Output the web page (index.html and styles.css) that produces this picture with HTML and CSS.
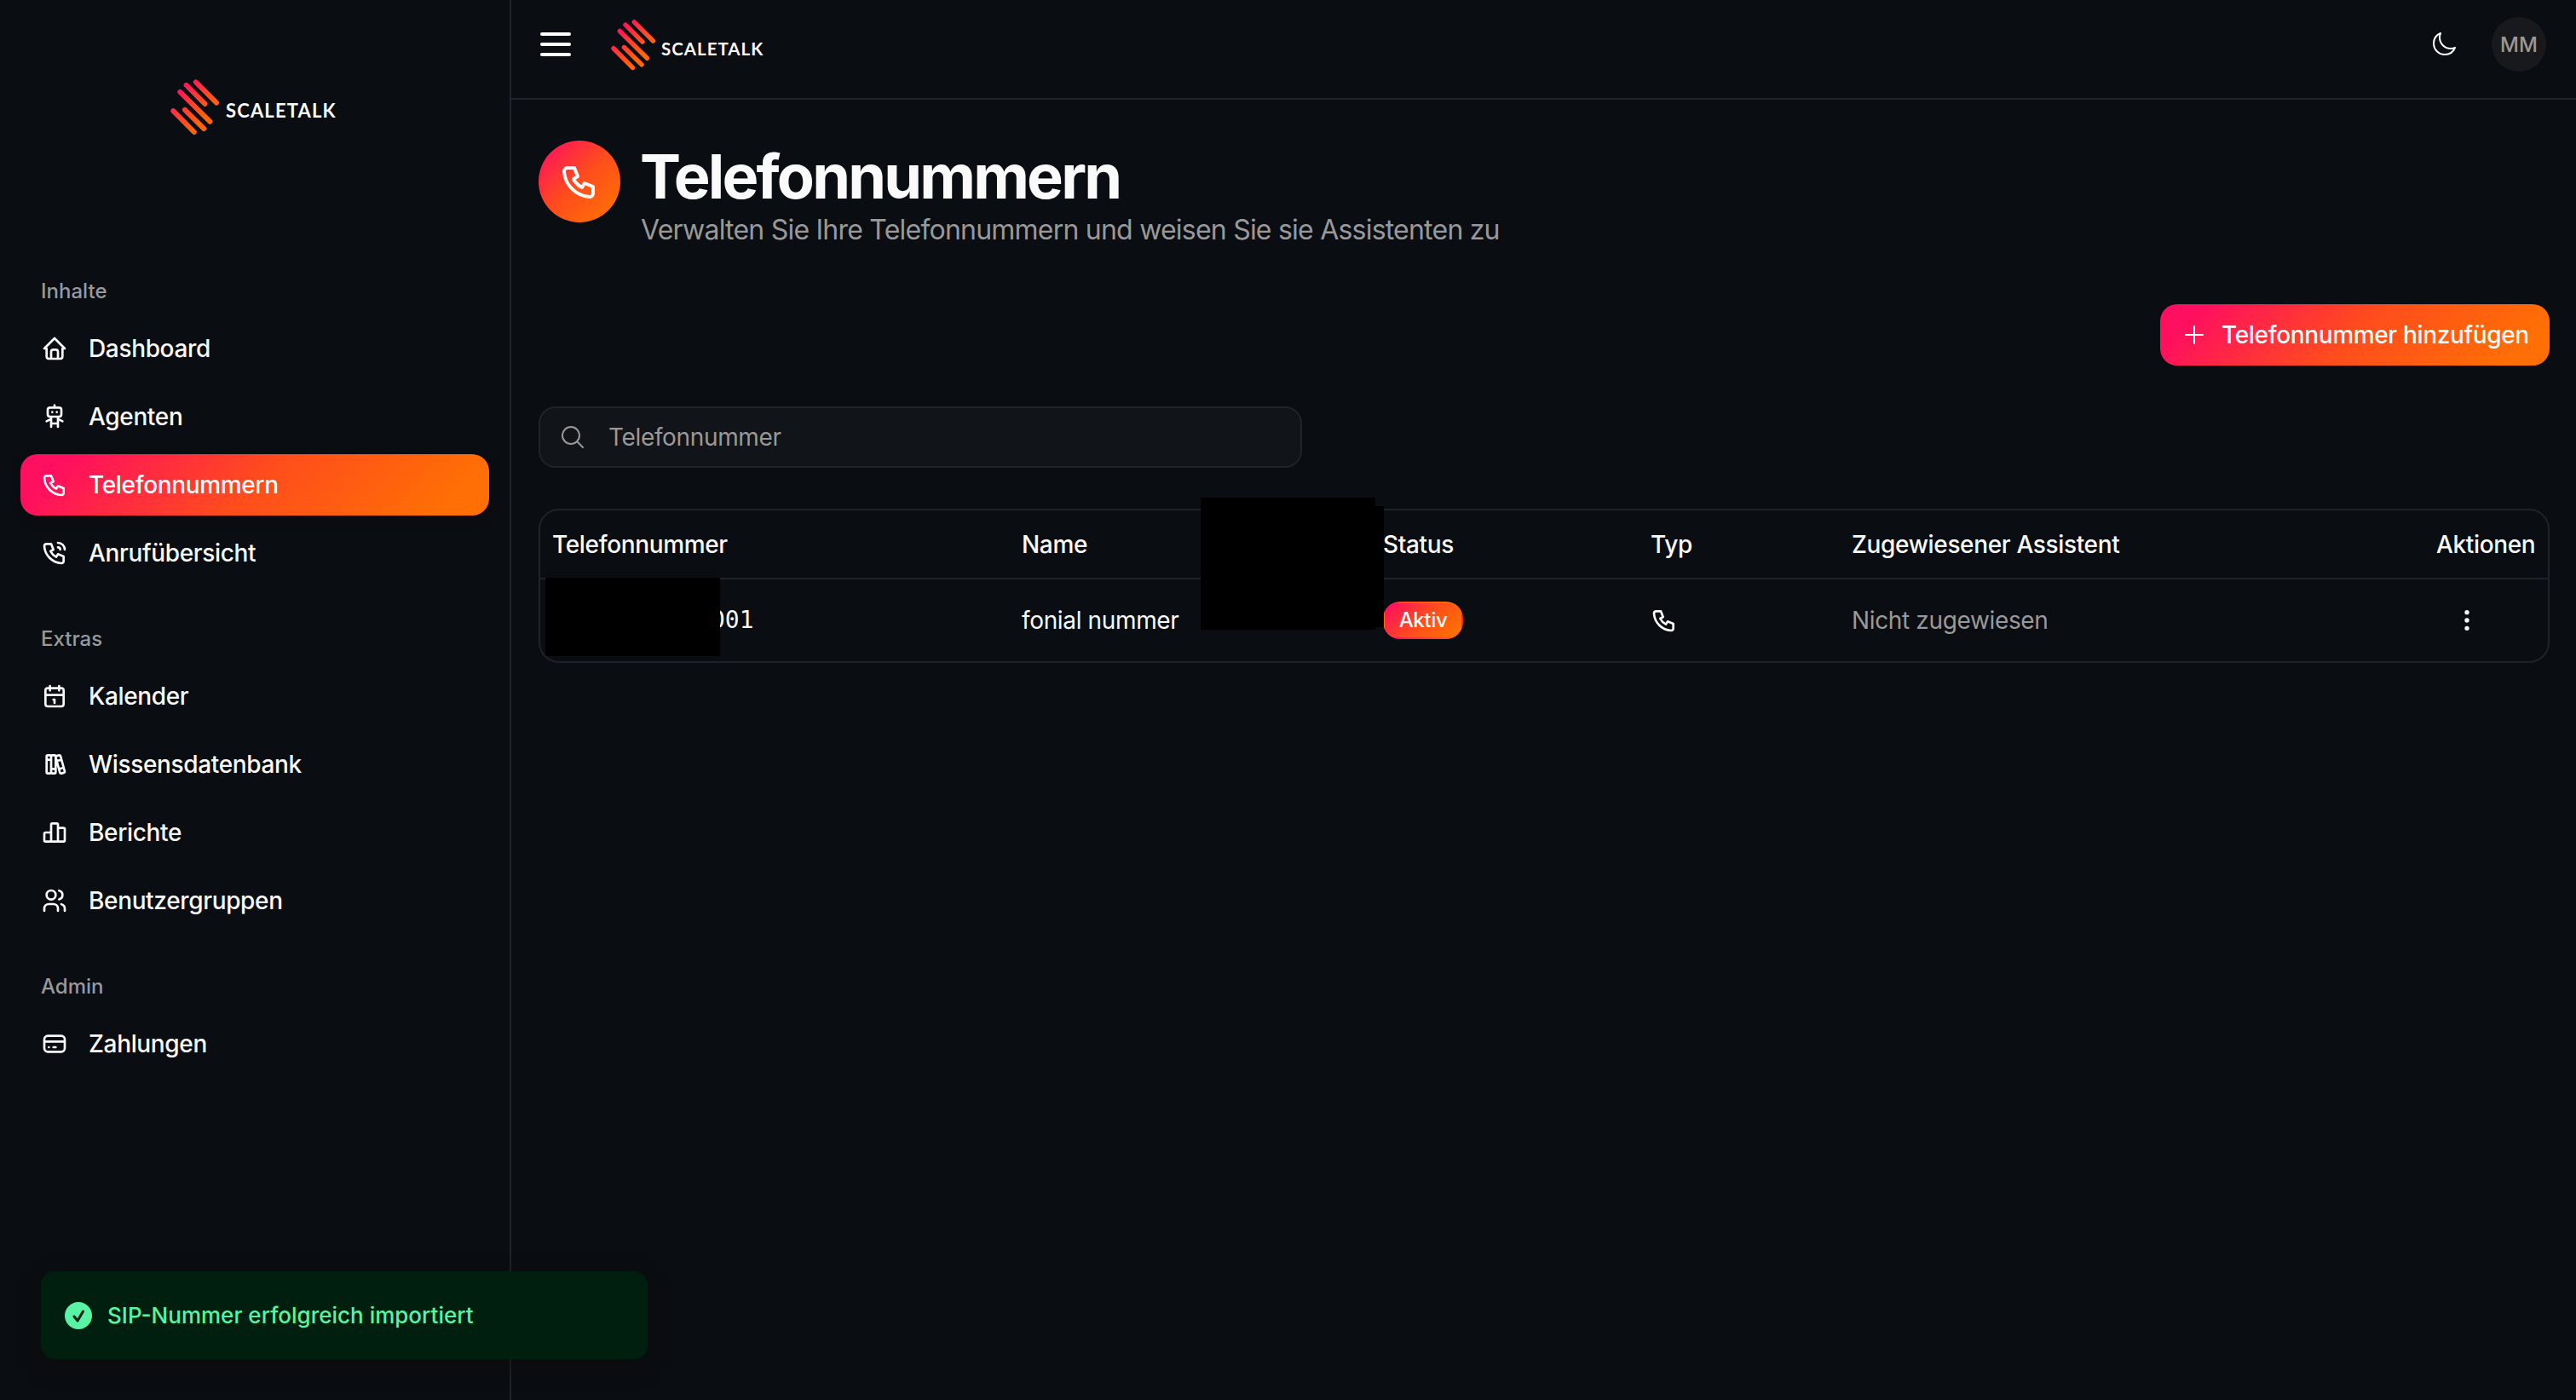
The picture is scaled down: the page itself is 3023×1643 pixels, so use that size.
FILE: index.html
```html
<!DOCTYPE html>
<html lang="de">
<head>
    <meta charset="UTF-8">
    <meta name="viewport" content="width=device-width, initial-scale=1.0">
    <title>Telefonnummern</title>
    <link rel="stylesheet" href="styles.css">
</head>
<body>
    <svg class="sprite" width="0" height="0">
        <defs>
            <linearGradient id="logo-gradient" gradientUnits="userSpaceOnUse" x1="90" y1="100" x2="190" y2="200">
                <stop offset="0" stop-color="#ff0f5f"/>
                <stop offset="0.5" stop-color="#ff4030"/>
                <stop offset="1" stop-color="#ff660a"/>
            </linearGradient>
            <symbol id="logo" viewBox="60 66 175 200">
                <path d="M150 78l73 73M116 89l66 66M94 113l106 105M70 180l74 75M111 176l68 67" fill="none" stroke="url(#logo-gradient)" stroke-width="18" stroke-linecap="round"/>
            </symbol>
            <symbol id="home" viewBox="0 0 24 24">
                <path d="M5 12H3l9-9l9 9h-2M5 12v7a2 2 0 0 0 2 2h10a2 2 0 0 0 2-2v-7M9 21v-6a2 2 0 0 1 2-2h2a2 2 0 0 1 2 2v6"/>
            </symbol>
            <symbol id="robot" viewBox="0 0 24 24">
                <path d="M6 6a2 2 0 0 1 2-2h8a2 2 0 0 1 2 2v4a2 2 0 0 1-2 2H8a2 2 0 0 1-2-2zM12 2v2M9 12v9M15 12v9M5 16l4-2M15 14l4 2M9 18h6M10 8v.01M14 8v.01"/>
            </symbol>
            <symbol id="phone" viewBox="0 0 24 24">
                <path d="M5 4h4l2 5l-2.5 1.5a11 11 0 0 0 5 5l1.5-2.5l5 2v4a2 2 0 0 1-2 2a16 16 0 0 1-15-15a2 2 0 0 1 2-2"/>
            </symbol>
            <symbol id="phone-call" viewBox="0 0 24 24">
                <path d="M5 4h4l2 5l-2.5 1.5a11 11 0 0 0 5 5l1.5-2.5l5 2v4a2 2 0 0 1-2 2a16 16 0 0 1-15-15a2 2 0 0 1 2-2M15 7a2 2 0 0 1 2 2M15 3a6 6 0 0 1 6 6"/>
            </symbol>
            <symbol id="calendar" viewBox="0 0 24 24">
                <path d="M4 7a2 2 0 0 1 2-2h12a2 2 0 0 1 2 2v12a2 2 0 0 1-2 2H6a2 2 0 0 1-2-2zM16 3v4M8 3v4M4 11h16M11 15h1M12 15v3"/>
            </symbol>
            <symbol id="books" viewBox="0 0 24 24">
                <path d="M5 5a1 1 0 0 1 1-1h2a1 1 0 0 1 1 1v14a1 1 0 0 1-1 1H6a1 1 0 0 1-1-1zM9 5a1 1 0 0 1 1-1h2a1 1 0 0 1 1 1v14a1 1 0 0 1-1 1h-2a1 1 0 0 1-1-1zM5 8h4M9 16h4M13.803 4.56l2.184-.53c.562-.135 1.133.19 1.282.732l3.695 13.418a1.02 1.02 0 0 1-.634 1.219l-.133.041l-2.184.53c-.562.135-1.133-.19-1.282-.732l-3.695-13.418a1.02 1.02 0 0 1 .634-1.219zM14 9l4-1M16 16l3.923-.98"/>
            </symbol>
            <symbol id="chart" viewBox="0 0 24 24">
                <path d="M3 13a1 1 0 0 1 1-1h4a1 1 0 0 1 1 1v6a1 1 0 0 1-1 1H4a1 1 0 0 1-1-1zM15 9a1 1 0 0 1 1-1h4a1 1 0 0 1 1 1v10a1 1 0 0 1-1 1h-4a1 1 0 0 1-1-1zM9 5a1 1 0 0 1 1-1h4a1 1 0 0 1 1 1v14a1 1 0 0 1-1 1h-4a1 1 0 0 1-1-1zM4 20h14"/>
            </symbol>
            <symbol id="users" viewBox="0 0 24 24">
                <path d="M5 7a4 4 0 1 0 8 0a4 4 0 1 0-8 0M3 21v-2a4 4 0 0 1 4-4h4a4 4 0 0 1 4 4v2M16 3.13a4 4 0 0 1 0 7.75M21 21v-2a4 4 0 0 0-3-3.85"/>
            </symbol>
            <symbol id="card" viewBox="0 0 24 24">
                <path d="M3 8a3 3 0 0 1 3-3h12a3 3 0 0 1 3 3v8a3 3 0 0 1-3 3H6a3 3 0 0 1-3-3zM3 10h18M7 15h.01M11 15h2"/>
            </symbol>
            <symbol id="moon" viewBox="0 0 24 24">
                <path d="M21.752 15.002A9.72 9.72 0 0 1 18 15.75c-5.385 0-9.75-4.365-9.75-9.75 0-1.33.266-2.597.748-3.752A9.753 9.753 0 0 0 3 11.25C3 16.635 7.365 21 12.75 21a9.753 9.753 0 0 0 9.002-5.998Z"/>
            </symbol>
            <symbol id="plus" viewBox="0 0 24 24">
                <path d="M12 4.5v15m7.5-7.5h-15"/>
            </symbol>
            <symbol id="search" viewBox="0 0 24 24">
                <path d="M21 21l-5.197-5.197A7.5 7.5 0 1 0 5.196 5.196a7.5 7.5 0 0 0 10.607 10.607"/>
            </symbol>
            <symbol id="dots" viewBox="0 0 24 24">
                <path d="M11 12a1 1 0 1 0 2 0a1 1 0 1 0-2 0M11 19a1 1 0 1 0 2 0a1 1 0 1 0-2 0M11 5a1 1 0 1 0 2 0a1 1 0 1 0-2 0"/>
            </symbol>
        </defs>
    </svg>

    <div class="app">
        <aside class="sidebar">
            <div class="logo">
                <svg class="logo-mark"><use href="#logo"/></svg>
                <span class="logo-text">SCALETALK</span>
            </div>

            <nav>
                <div class="nav-section">
                    <div class="nav-label">Inhalte</div>
                    <a class="nav-item"><svg class="icon"><use href="#home"/></svg><span>Dashboard</span></a>
                    <a class="nav-item"><svg class="icon"><use href="#robot"/></svg><span>Agenten</span></a>
                    <a class="nav-item active"><svg class="icon"><use href="#phone"/></svg><span>Telefonnummern</span></a>
                    <a class="nav-item"><svg class="icon"><use href="#phone-call"/></svg><span>Anrufübersicht</span></a>
                </div>
                <div class="nav-section">
                    <div class="nav-label">Extras</div>
                    <a class="nav-item"><svg class="icon"><use href="#calendar"/></svg><span>Kalender</span></a>
                    <a class="nav-item"><svg class="icon"><use href="#books"/></svg><span>Wissensdatenbank</span></a>
                    <a class="nav-item"><svg class="icon"><use href="#chart"/></svg><span>Berichte</span></a>
                    <a class="nav-item"><svg class="icon"><use href="#users"/></svg><span>Benutzergruppen</span></a>
                </div>
                <div class="nav-section">
                    <div class="nav-label">Admin</div>
                    <a class="nav-item"><svg class="icon"><use href="#card"/></svg><span>Zahlungen</span></a>
                </div>
            </nav>
        </aside>

        <div class="main">
            <header class="topbar">
                <button class="menu-button" aria-label="Menü">
                    <span></span>
                    <span></span>
                    <span></span>
                </button>
                <div class="logo logo-small">
                    <svg class="logo-mark"><use href="#logo"/></svg>
                    <span class="logo-text">SCALETALK</span>
                </div>
                <div class="topbar-right">
                    <svg class="icon thin"><use href="#moon"/></svg>
                    <div class="avatar">MM</div>
                </div>
            </header>

            <main class="content">
                <div class="page-head">
                    <div class="page-icon">
                        <svg class="icon"><use href="#phone"/></svg>
                    </div>
                    <div>
                        <h1>Telefonnummern</h1>
                        <p class="subtitle">Verwalten Sie Ihre Telefonnummern und weisen Sie sie Assistenten zu</p>
                    </div>
                </div>

                <div class="actions">
                    <button class="add-button">
                        <svg class="icon thin"><use href="#plus"/></svg>
                        <span>Telefonnummer hinzufügen</span>
                    </button>
                </div>

                <div class="search">
                    <svg class="icon thin"><use href="#search"/></svg>
                    <span>Telefonnummer</span>
                </div>

                <div class="table">
                    <div class="row head">
                        <div>Telefonnummer</div>
                        <div>Name</div>
                        <div>Status</div>
                        <div>Typ</div>
                        <div>Zugewiesener Assistent</div>
                        <div>Aktionen</div>
                    </div>
                    <div class="row">
                        <div class="number">001</div>
                        <div>fonial nummer</div>
                        <div><span class="badge">Aktiv</span></div>
                        <div><svg class="icon"><use href="#phone"/></svg></div>
                        <div class="muted">Nicht zugewiesen</div>
                        <div><button class="row-menu" aria-label="Mehr"><svg class="icon"><use href="#dots"/></svg></button></div>
                    </div>
                    <div class="mask mask-number"></div>
                    <div class="mask mask-name"></div>
                    <div class="mask mask-name-edge"></div>
                </div>
            </main>
        </div>
    </div>

    <div class="toast">
        <svg class="toast-icon" viewBox="0 0 32 32">
            <circle cx="16" cy="16" r="16"/>
            <path d="M11 17l4 5l6.5-11"/>
        </svg>
        <span>SIP-Nummer erfolgreich importiert</span>
    </div>
</body>
</html>
```
FILE: styles.css
```css
:root {
    --bg: #0a0d12;
    --border: #1f232b;
    --text: #fafafa;
    --muted: #999;
    --gradient: linear-gradient(135deg, #ff0f5f 10%, #ff4d1c 50%, #ff6f05 90%);
}
* {
    box-sizing: border-box;
}
body {
    margin: 0;
    font-family: Inter, sans-serif;
    font-size: 28px;
    line-height: 40px;
    letter-spacing: -0.35px;
    background-color: var(--bg);
    color: var(--text);
}
button {
    font: inherit;
    letter-spacing: inherit;
    color: inherit;
    background: none;
    border: none;
    padding: 0;
    cursor: pointer;
}
.sprite {
    display: block;
    position: absolute;
}
.app {
    display: flex;
    height: 1643px;
}

/* icons */
.icon {
    width: 32px;
    height: 32px;
    flex-shrink: 0;
    display: block;
    fill: none;
    stroke: currentColor;
    stroke-width: 2;
    stroke-linecap: round;
    stroke-linejoin: round;
}
.icon.thin {
    stroke-width: 1.5;
}

/* sidebar */
.sidebar {
    width: 600px;
    flex-shrink: 0;
    padding: 92px 24px 0;
    border-right: 2px solid var(--border);
}
.logo {
    display: flex;
    align-items: center;
    gap: 7px;
    height: 67px;
}
.sidebar .logo {
    margin: 0 0 134px 176px;
}
.logo-mark {
    width: 58px;
    height: 67px;
}
.logo-text {
    font-family: Lato, sans-serif;
    font-weight: 700;
    font-size: 22px;
    letter-spacing: 1.15px;
    margin-top: 9px;
}
.nav-section {
    padding: 16px 0;
}
.nav-label {
    height: 64px;
    padding: 0 24px;
    font-size: 24px;
    font-weight: 500;
    line-height: 66px;
    letter-spacing: 0;
    color: var(--muted);
}
.nav-item {
    display: flex;
    align-items: center;
    gap: 24px;
    height: 72px;
    padding: 0 24px;
    margin-bottom: 8px;
    border-radius: 20px;
    font-weight: 500;
}
.nav-item:last-child {
    margin-bottom: 0;
}
.nav-item.active {
    background: var(--gradient);
    box-shadow: 0 4px 12px rgba(16, 12, 12, 0.6);
}

/* top bar */
.main {
    flex: 1;
    min-width: 0;
}
.topbar {
    display: flex;
    align-items: center;
    height: 117px;
    padding: 0 35px 11px 34px;
    border-bottom: 2px solid var(--border);
}
.menu-button {
    display: flex;
    flex-direction: column;
    gap: 8px;
    width: 36px;
    margin-right: 47px;
}
.menu-button span {
    height: 4px;
    border-radius: 2px;
    background-color: #fff;
}
.logo-small {
    gap: 6px;
}
.logo-small .logo-mark {
    width: 53px;
    height: 61px;
}
.logo-small .logo-text {
    font-size: 20.5px;
    letter-spacing: 1px;
}
.topbar-right {
    display: flex;
    align-items: center;
    gap: 40px;
    margin-left: auto;
}
.avatar {
    width: 64px;
    height: 64px;
    border-radius: 50%;
    background-color: #18191d;
    color: var(--muted);
    font-size: 24px;
    font-weight: 500;
    line-height: 65px;
    letter-spacing: 0;
    text-align: center;
}

/* content */
.content {
    padding: 48px 31px 0 32px;
}
.page-head {
    display: flex;
    gap: 24px;
    height: 128px;
}
.page-icon {
    display: flex;
    align-items: center;
    justify-content: center;
    width: 96px;
    height: 96px;
    border-radius: 50%;
    background: linear-gradient(135deg, #ff0f5f 5%, #ff4d1c 50%, #ff6f05 90%);
}
.page-icon .icon {
    width: 48px;
    height: 48px;
}
h1 {
    margin: 4px 0 0 -1px;
    font-size: 72px;
    font-weight: 700;
    line-height: 76px;
    letter-spacing: -2.8px;
}
.subtitle {
    margin: 5px 0 0;
    font-size: 32px;
    line-height: 40px;
    letter-spacing: -0.78px;
    color: var(--muted);
}
.actions {
    display: flex;
    justify-content: flex-end;
    margin-top: 64px;
}
.add-button {
    display: flex;
    align-items: center;
    gap: 16px;
    width: 457px;
    height: 72px;
    padding: 0 24px;
    border-radius: 20px;
    background: var(--gradient);
    font-weight: 500;
    white-space: nowrap;
}
.search {
    display: flex;
    align-items: center;
    gap: 26px;
    width: 896px;
    height: 72px;
    margin-top: 48px;
    padding: 0 22px;
    border: 2px solid var(--border);
    border-radius: 20px;
    background-color: #111418;
    color: var(--muted);
}

/* table */
.table {
    position: relative;
    margin-top: 48px;
    border: 2px solid var(--border);
    border-radius: 24px;
}
.row {
    display: grid;
    grid-template-columns: 549px 424px 314px 236px 1fr 147px;
    align-items: center;
    height: 96px;
}
.row > div {
    padding: 0 16px;
    white-space: nowrap;
}
.row > div:first-child {
    padding-left: 14px;
}
.row.head {
    height: 81px;
    border-bottom: 2px solid var(--border);
    font-weight: 500;
}
.row > div.number {
    padding-left: 200px;
    font-family: "DejaVu Sans Mono", monospace;
    letter-spacing: 0;
}
.badge {
    display: block;
    width: 94px;
    height: 44px;
    border: 2px solid transparent;
    border-radius: 20px;
    background: linear-gradient(135deg, #ff0f5f 5%, #ff4d1c 50%, #ff6f05 90%);
    font-size: 24px;
    font-weight: 500;
    line-height: 40px;
    text-align: center;
}
.muted {
    color: var(--muted);
}
.row-menu {
    display: flex;
    align-items: center;
    justify-content: center;
    width: 72px;
    height: 64px;
}

/* black bars over private data */
.mask {
    position: absolute;
    background-color: #000;
}
.mask-number {
    left: 6px;
    top: 79px;
    width: 205px;
    height: 92px;
}
.mask-name {
    left: 775px;
    top: -15px;
    width: 205px;
    height: 155px;
}
.mask-name-edge {
    left: 980px;
    top: -5px;
    width: 10px;
    height: 142px;
}

/* toast */
.toast {
    position: absolute;
    left: 48px;
    top: 1492px;
    display: flex;
    align-items: center;
    gap: 18px;
    width: 712px;
    height: 103px;
    padding: 0 28px;
    border-radius: 16px;
    background-color: #001f0f;
    box-shadow: 0 8px 24px rgba(16, 12, 12, 0.6);
    color: #59f3a6;
    font-size: 26px;
    font-weight: 500;
    letter-spacing: 0;
}
.toast-icon {
    width: 32px;
    height: 32px;
    fill: #59f3a6;
}
.toast-icon path {
    fill: none;
    stroke: #001f0f;
    stroke-width: 3;
    stroke-linecap: round;
    stroke-linejoin: round;
}
```
